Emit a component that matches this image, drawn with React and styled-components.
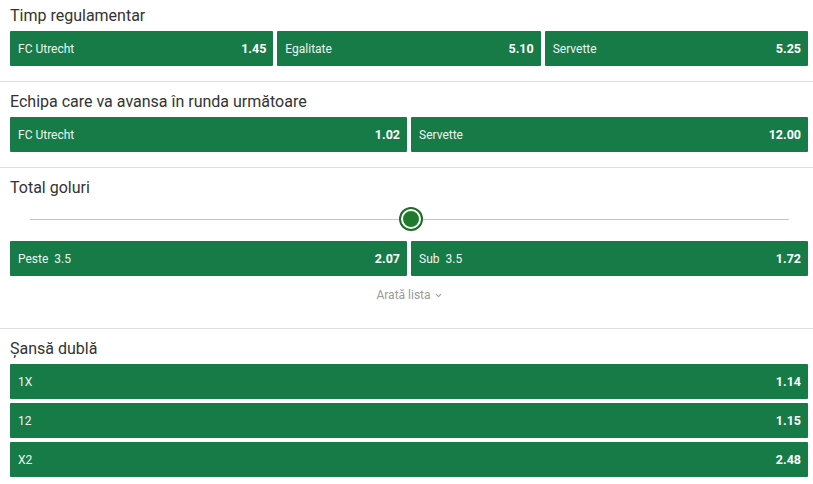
import React from 'react'
import styled, {createGlobalStyle} from 'styled-components'

const Global = createGlobalStyle`
  html, body {
    margin: 0;
    padding: 0;
    background: #fff;
    font-family: Roboto, "Liberation Sans", Arial, sans-serif;
  }
`

const Page = styled.div`
  width: 813px;
`

const Section = styled.section`
  padding: ${(p) => (p.first ? '4px' : '8px')} 5px 15px 10px;
  border-bottom: ${(p) => (p.last ? 'none' : '1px solid #dedede')};
`

const Title = styled.h3`
  margin: 0 0 3px;
  font-size: 16px;
  line-height: 24px;
  font-weight: 400;
  color: #333;
`

const Row = styled.div`
  display: grid;
  grid-template-columns: repeat(${(p) => p.cols}, 1fr);
  gap: 4px;
`

const Stack = styled.div`
  display: flex;
  flex-direction: column;
  gap: 4px;
`

const Odd = styled.button`
  display: flex;
  align-items: center;
  justify-content: space-between;
  height: 35px;
  padding: 0 7px 0 8px;
  border: none;
  border-radius: 1px;
  background: #177b48;
  color: #fff;
  font-family: inherit;
  font-size: 12px;
  cursor: pointer;
`

const Label = styled.span`
  font-weight: 400;
  color: #eef5f1;
`

const Line = styled.span`
  margin-left: 6px;
`

const Price = styled.span`
  font-weight: 700;
  font-size: 12.5px;
`

const Slider = styled.div`
  position: relative;
  height: 32px;
  margin: 0 19px 6px 20px;
  display: flex;
  align-items: center;
`

const Track = styled.div`
  flex: 1;
  height: 1px;
  background: #c4c4c4;
`

const Thumb = styled.div`
  position: absolute;
  left: 371px;
  top: 50%;
  width: 16px;
  height: 16px;
  margin-top: -10px;
  border-radius: 50%;
  background: #1e7a2c;
  border: 2px solid #fff;
  box-shadow: 0 0 0 2px #1c6b27;
`

const More = styled.div`
  display: flex;
  justify-content: center;
  align-items: center;
  gap: 4px;
  padding: 8px 0 7px;
  line-height: 22px;
  font-size: 12px;
  color: #9a9a9a;
`

const Chevron = () => (
  <svg width="7" height="5" viewBox="0 0 7 5">
    <path d="M1 1.2 L3.5 3.6 L6 1.2" fill="none" stroke="#9a9a9a" strokeWidth="1.1" />
  </svg>
)

const Button = ({label, line, price}) => (
  <Odd>
    <Label>
      {label}
      {line && <Line>{line}</Line>}
    </Label>
    <Price>{price}</Price>
  </Odd>
)

const App = () => (
  <Page>
    <Global />
    <Section first>
      <Title>Timp regulamentar</Title>
      <Row cols={3}>
        <Button label="FC Utrecht" price="1.45" />
        <Button label="Egalitate" price="5.10" />
        <Button label="Servette" price="5.25" />
      </Row>
    </Section>

    <Section>
      <Title>Echipa care va avansa în runda următoare</Title>
      <Row cols={2}>
        <Button label="FC Utrecht" price="1.02" />
        <Button label="Servette" price="12.00" />
      </Row>
    </Section>

    <Section>
      <Title>Total goluri</Title>
      <Slider>
        <Track />
        <Thumb />
      </Slider>
      <Row cols={2}>
        <Button label="Peste" line="3.5" price="2.07" />
        <Button label="Sub" line="3.5" price="1.72" />
      </Row>
      <More>
        Arată lista <Chevron />
      </More>
    </Section>

    <Section last>
      <Title>Șansă dublă</Title>
      <Stack>
        <Button label="1X" price="1.14" />
        <Button label="12" price="1.15" />
        <Button label="X2" price="2.48" />
      </Stack>
    </Section>
  </Page>
)

export default App
